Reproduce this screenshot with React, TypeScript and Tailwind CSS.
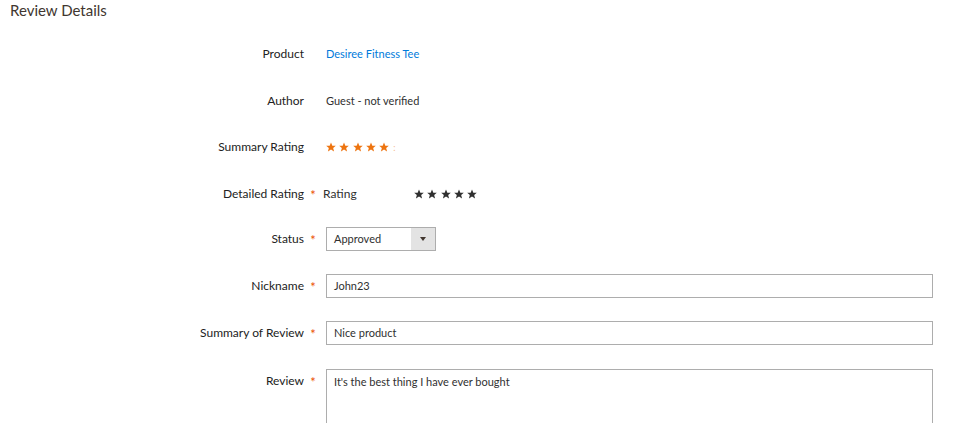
import React from 'react';

const Star = ({ color }: { color: string }) => (
  <svg width="10" height="10" viewBox="0 0 24 24" className="shrink-0">
    <polygon
      points="12,1 15.2,8.8 23.5,9 17.2,14.3 19.4,22.8 12,18 4.6,22.8 6.8,14.3 0.5,9 8.8,8.8"
      fill={color}
    />
  </svg>
);

const Stars = ({ color }: { color: string }) => (
  <div className="flex items-center gap-[3.3px]">
    {[0, 1, 2, 3, 4].map(i => (
      <Star key={i} color={color} />
    ))}
  </div>
);

interface RowProps {
  label: string;
  required?: boolean;
  className?: string;
  children: React.ReactNode;
}

const Row: React.FC<RowProps> = ({ label, required, className = '', children }) => (
  <div className={`flex items-start ${className}`}>
    <div className="w-[304px] h-6 flex items-center justify-end text-[12px] text-[#222222]">
      {label}
    </div>
    <div className="w-[22px] h-6 flex items-center justify-center">
      {required && <span className="text-[13px] text-[#eb5202] leading-none mt-[3px] ml-[-4px]">*</span>}
    </div>
    <div className="flex-1 min-w-0">{children}</div>
  </div>
);

const App: React.FC = () => {
  return (
    <div className="w-[964px] h-[423px] overflow-hidden bg-white font-['Lato',sans-serif] text-[#303030]">
      <h2 className="pl-[10px] pt-0 text-[15px] leading-[20px] text-[#41362f]">Review Details</h2>

      <div className="flex flex-col pr-[31px]">
        <Row label="Product" className="mt-[22px]">
          <div className="h-6 flex items-center text-[11px] text-[#007bdb]">Desiree Fitness Tee</div>
        </Row>

        <Row label="Author" className="mt-[23px]">
          <div className="h-6 flex items-center text-[11px]">Guest - not verified</div>
        </Row>

        <Row label="Summary Rating" className="mt-[22px]">
          <div className="h-6 flex items-center">
            <Stars color="#ed7410" />
            <span className="ml-[4px] text-[9px] text-[#ed7410] opacity-50 leading-none">:</span>
          </div>
        </Row>

        <Row label="Detailed Rating" required className="mt-[23px]">
          <div className="h-6 flex items-center text-[12px] ml-[-3px]">
            <span className="w-[91px]">Rating</span>
            <Stars color="#303030" />
          </div>
        </Row>

        <Row label="Status" required className="mt-[21px]">
          <div className="w-[110px] h-[24px] border border-[#adadad] flex items-center text-[11px] bg-white">
            <span className="flex-1 pl-[7px]">Approved</span>
            <span className="w-[24px] h-full bg-[#e3e3e3] flex items-center justify-center">
              <span className="w-0 h-0 border-l-[3.5px] border-r-[3.5px] border-t-[4px] border-l-transparent border-r-transparent border-t-[#41362f]" />
            </span>
          </div>
        </Row>

        <Row label="Nickname" required className="mt-[23px]">
          <div className="h-[24px] border border-[#adadad] flex items-center pl-[7px] text-[11px]">John23</div>
        </Row>

        <Row label="Summary of Review" required className="mt-[23px]">
          <div className="h-[24px] border border-[#adadad] flex items-center pl-[7px] text-[11px]">Nice product</div>
        </Row>

        <Row label="Review" required className="mt-[24px]">
          <div className="h-[80px] border border-[#adadad] pl-[7px] pt-[4px] text-[11px]">
            It's the best thing I have ever bought
          </div>
        </Row>
      </div>
    </div>
  );
};

export default App;
